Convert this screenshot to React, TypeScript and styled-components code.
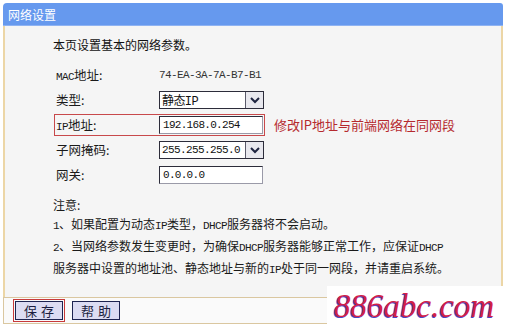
import React from "react";
import styled, { createGlobalStyle } from "styled-components";

const GlobalStyle = createGlobalStyle`
  html, body { margin: 0; padding: 0; background: #ffffff; }
  body { font-family: "Noto Sans CJK SC", "Noto Sans", sans-serif; color: #1a1a1a; }
  * { box-sizing: border-box; }
`;

const Page = styled.div`
  position: relative;
  width: 506px;
  height: 327px;
  overflow: hidden;
  padding: 3px 3px 0 3px;
  background: #ffffff;
`;

const Panel = styled.div`
  display: flex;
  flex-direction: column;
  width: 500px;
`;

const TitleBar = styled.div`
  height: 23px;
  background: #6699ee;
  border-radius: 4px 3px 0 0;
  color: #ffffff;
  font-size: 12px;
  line-height: 23px;
  padding-left: 5px;
  border-bottom: 1px solid #8fb3f2;
`;

const Body = styled.div`
  height: 271px;
  background: #f5f5f5;
  border-left: 2px solid #ecd6a6;
  border-right: 2px solid #ecd6a6;
  padding: 9px 0 0 48px;
  display: flex;
  flex-direction: column;
`;

const Intro = styled.div`
  font-size: 12px;
  line-height: 20px;
  color: #111;
`;

const Form = styled.div`
  margin: 7px 0 0 1px;
  display: flex;
  flex-direction: column;
`;

const Row = styled.div`
  height: 25px;
  display: flex;
  align-items: center;
`;

const Field = styled.div<{ $mark?: boolean }>`
  width: 211px;
  height: 22px;
  display: flex;
  align-items: center;
  border: 1px solid ${(p) => (p.$mark ? "#c8494b" : "transparent")};
`;

const Label = styled.div`
  width: 104px;
  padding-left: 1px;
  font-size: 12.5px;
  color: #1a1a1a;
`;

const Asc = styled.span`
  font-family: "Liberation Mono", monospace;
  font-size: 11px;
  letter-spacing: -0.6px;
`;

const Value = styled.div`
  font-family: "Liberation Mono", monospace;
  font-size: 11px;
  letter-spacing: -0.6px;
  color: #333;
`;

const TextBox = styled.div`
  width: 104px;
  height: 18px;
  background: #ffffff;
  border: 1px solid #2c2c3a;
  border-right-color: #9a9aa8;
  border-bottom-color: #9a9aa8;
  display: flex;
  align-items: center;
  padding-left: 3px;
  font-family: "Liberation Mono", monospace;
  font-size: 11px;
  letter-spacing: -0.7px;
  color: #111;
`;

const SelectBox = styled.div`
  width: 105px;
  height: 18px;
  background: #ffffff;
  border: 1px solid #2c2c3a;
  display: flex;
  align-items: center;
`;

const SelectText = styled.div`
  flex: 1;
  padding-left: 2px;
  font-size: 12px;
  color: #111;
  font-family: "Liberation Mono", "Noto Sans CJK SC", monospace;
  letter-spacing: -0.6px;
  white-space: nowrap;
  overflow: hidden;
`;

const SelectText2 = styled(SelectText)`
  font-size: 11px;
`;

const Arrow = styled.div`
  width: 18px;
  height: 16px;
  background: #e8e8ee;
  border-left: 1px solid #5a5a6a;
  display: flex;
  align-items: center;
  justify-content: center;
`;

const Hint = styled.div`
  margin-left: 9px;
  font-size: 13px;
  color: #b52a2e;
  white-space: nowrap;
`;

const Notes = styled.div`
  margin-top: 8px;
  font-size: 12px;
  line-height: 19px;
  color: #1a1a1a;
  white-space: nowrap;
`;

const Footer = styled.div`
  height: 27px;
  border-top: 1px solid #dac7a0;
  border-bottom: 1px solid #dac7a0;
  border-left: 1px solid #dac7a0;
  background: #fafafa;
  display: flex;
  align-items: center;
  padding-left: 9px;
  gap: 7px;
`;

const Focus = styled.div`
  border: 1px solid #c83a3a;
  padding: 1px;
  display: flex;
`;

const Button = styled.div`
  width: 48px;
  height: 19px;
  background: #dcdcf2;
  border: 1px solid #1e2450;
  display: flex;
  align-items: center;
  justify-content: center;
  font-size: 13px;
  letter-spacing: 4px;
  padding-left: 4px;
  color: #1c1f40;
`;

const Watermark = styled.div`
  position: absolute;
  right: 0;
  bottom: 0;
  width: 179px;
  height: 41px;
  background: #ffffff;
  padding-left: 7px;
  font-family: "Liberation Serif", serif;
  font-style: italic;
  font-size: 33px;
  line-height: 40px;
  color: #d21f4a;
  text-shadow: -1px 1px 0 #4a44c4;
  white-space: nowrap;
`;

const Chevron = () => (
  <svg width="12" height="10" viewBox="0 0 12 10">
    <path d="M2 3 L6 7 L10 3" fill="none" stroke="#1e2440" strokeWidth="2" />
  </svg>
);

export default function App() {
  return (
    <>
      <GlobalStyle />
      <Page>
        <Panel>
          <TitleBar>网络设置</TitleBar>
          <Body>
            <Intro>本页设置基本的网络参数。</Intro>
            <Form>
              <Row>
                <Field>
                  <Label>
                    <Asc>MAC</Asc>地址:
                  </Label>
                  <Value>74-EA-3A-7A-B7-B1</Value>
                </Field>
              </Row>
              <Row>
                <Field>
                  <Label>类型:</Label>
                  <SelectBox>
                    <SelectText>静态IP</SelectText>
                    <Arrow>
                      <Chevron />
                    </Arrow>
                  </SelectBox>
                </Field>
              </Row>
              <Row>
                <Field $mark>
                  <Label>
                    <Asc>IP</Asc>地址:
                  </Label>
                  <TextBox>192.168.0.254</TextBox>
                </Field>
                <Hint>修改IP地址与前端网络在同网段</Hint>
              </Row>
              <Row>
                <Field>
                  <Label>子网掩码:</Label>
                  <SelectBox>
                    <SelectText2>255.255.255.0</SelectText2>
                    <Arrow>
                      <Chevron />
                    </Arrow>
                  </SelectBox>
                </Field>
              </Row>
              <Row>
                <Field>
                  <Label>网关:</Label>
                  <TextBox>0.0.0.0</TextBox>
                </Field>
              </Row>
            </Form>
            <Notes>
              <div>注意:</div>
              <div>
                <Asc>1</Asc>、如果配置为动态<Asc>IP</Asc>类型，<Asc>DHCP</Asc>服务器将不会启动。
              </div>
              <div>
                <Asc>2</Asc>、当网络参数发生变更时，为确保<Asc>DHCP</Asc>服务器能够正常工作，应保证<Asc>DHCP</Asc>
              </div>
              <div>
                服务器中设置的地址池、静态地址与新的<Asc>IP</Asc>处于同一网段，并请重启系统。
              </div>
            </Notes>
          </Body>
          <Footer>
            <Focus>
              <Button>保存</Button>
            </Focus>
            <Button>帮助</Button>
          </Footer>
        </Panel>
        <Watermark>886abc.com</Watermark>
      </Page>
    </>
  );
}
